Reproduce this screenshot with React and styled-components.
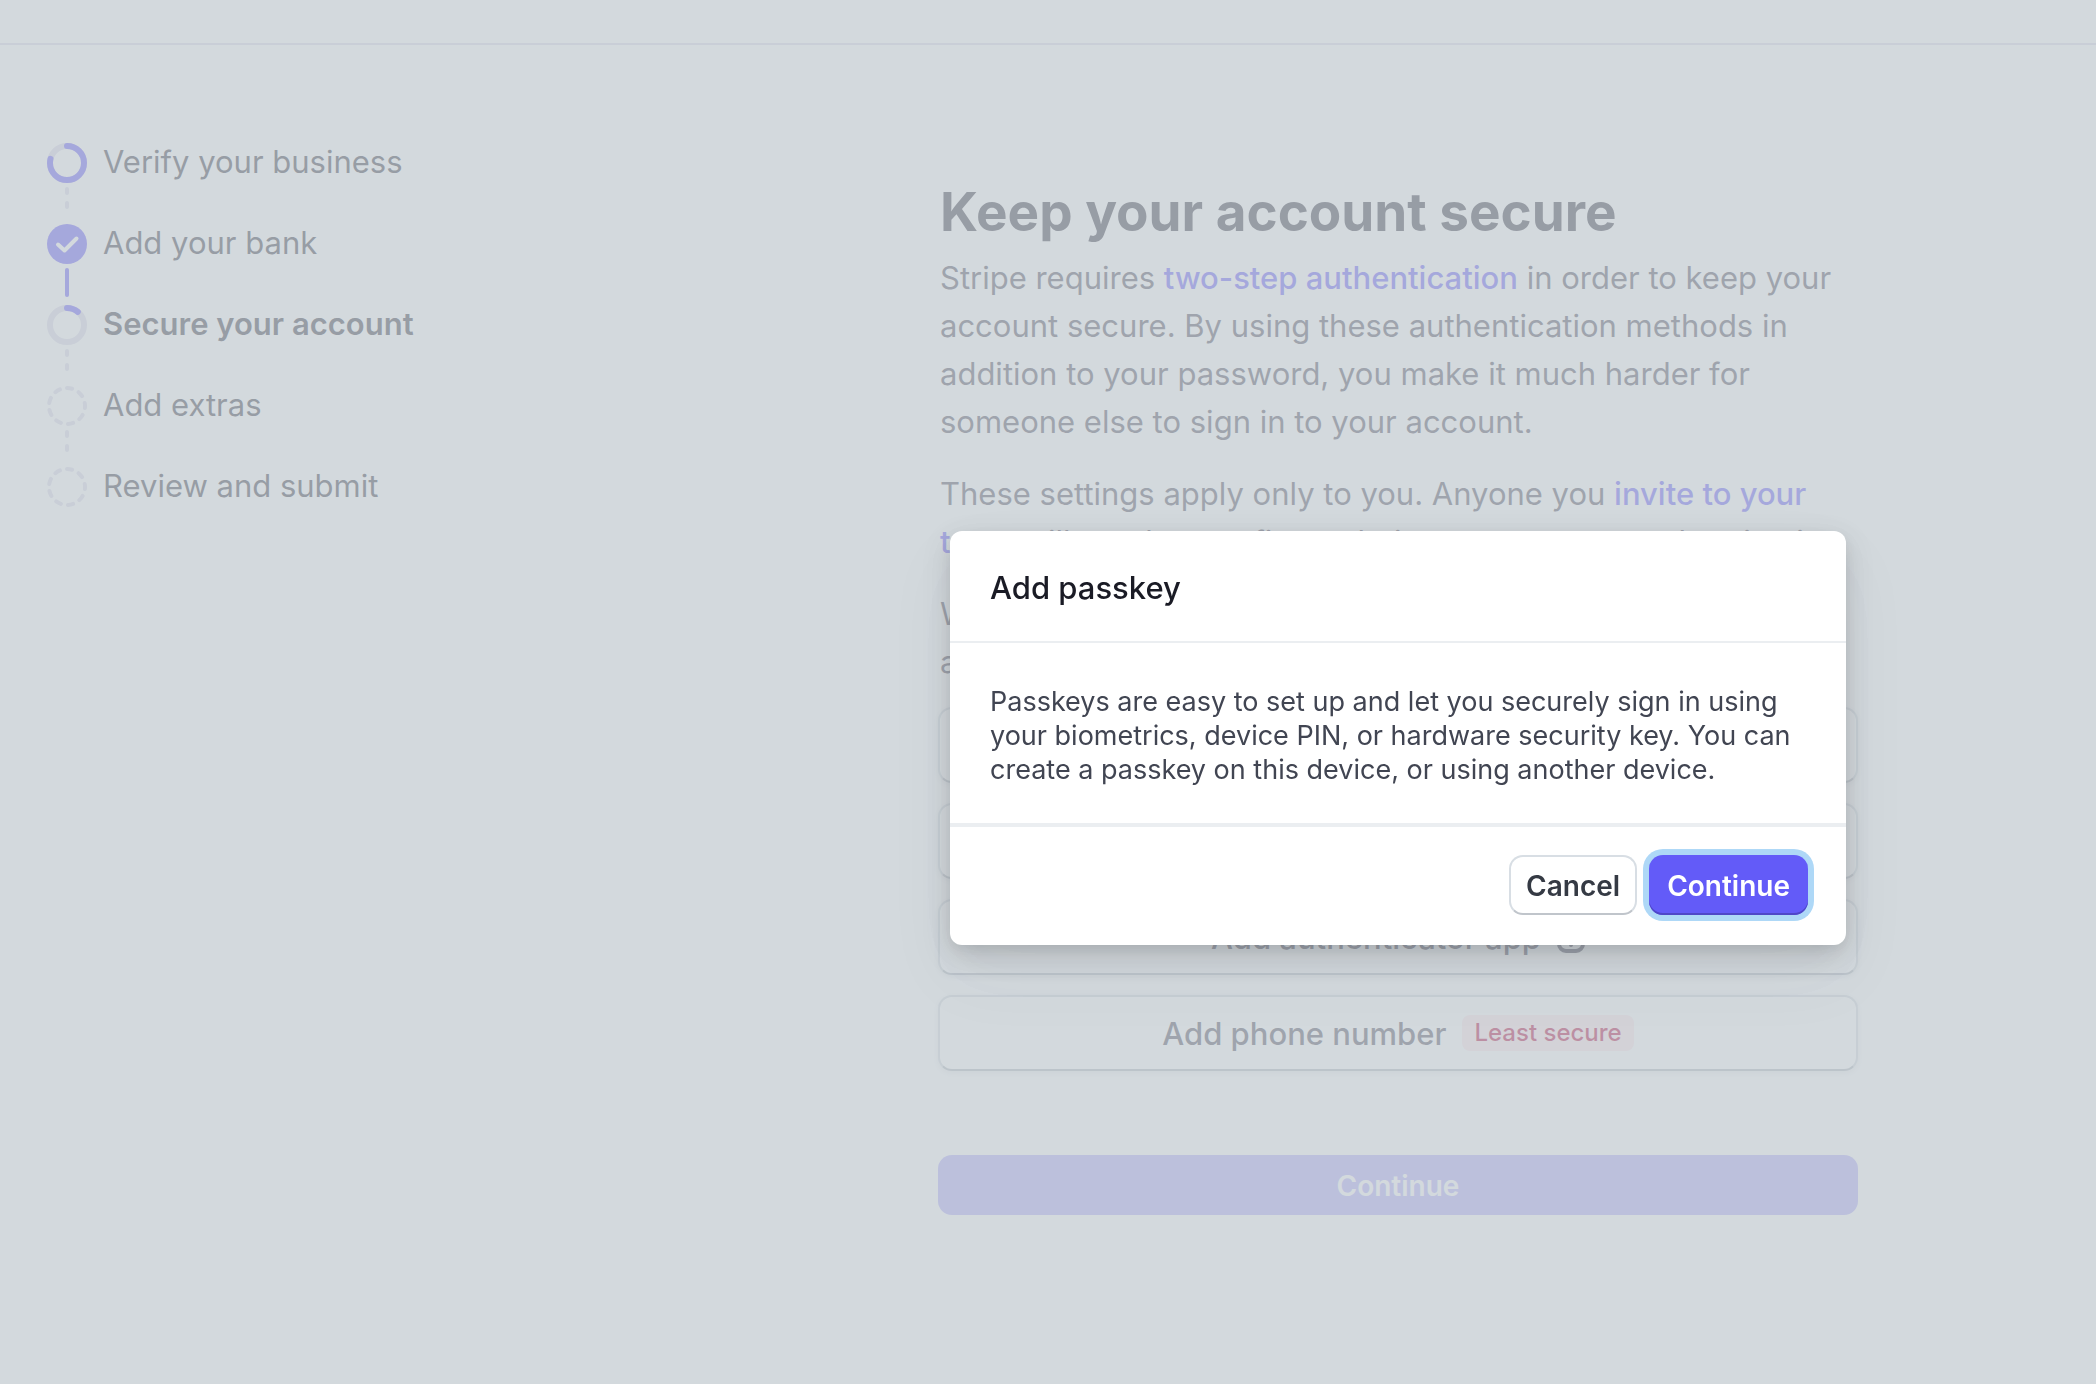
import styled, { createGlobalStyle } from 'styled-components'

const colors = {
  text: '#524f60',
  heading: '#383644',
  accent: '#675afa',
  track: '#dcdaea',
  white: '#ffffff',
}

const GlobalStyle = createGlobalStyle`
  * {
    box-sizing: border-box;
  }

  body {
    margin: 0;
    background: ${colors.white};
    color: ${colors.text};
    font-family: Inter, 'Liberation Sans', sans-serif;
    font-size: 31px;
    line-height: 48px;
  }

  button {
    font-family: inherit;
    cursor: pointer;
  }
`

const Page = styled.div`
  min-height: 100vh;
`
const TopBar = styled.header`
  height: 45px;
  border-bottom: 2px solid ${colors.track};
`
const Columns = styled.div`
  display: grid;
  grid-template-columns: 700px 1fr;
`
const Steps = styled.ol`
  display: flex;
  flex-direction: column;
  margin: 0;
  padding: 98px 24px 0 47px;
  list-style: none;
`
const Step = styled.li`
  display: flex;
  gap: 16px;
  height: 81px;
  color: ${colors.heading};
  font-weight: ${({ $current }) => ($current ? 600 : 400)};
  line-height: 38px;
`
const Marker = styled.svg`
  flex: none;
  width: 40px;
  height: 81px;
  fill: none;
  stroke-linecap: round;
`
const Main = styled.main`
  width: 920px;
  margin: 133px auto 0;
`
const Title = styled.h1`
  margin: 0;
  padding: 0 2px;
  color: ${colors.heading};
  font-size: 53px;
  font-weight: 700;
  line-height: 68px;
`
const Intro = styled.div`
  display: flex;
  flex-direction: column;
  gap: 24px;
  margin-top: 8px;
  padding: 0 2px;
`
const Paragraph = styled.p`
  margin: 0;
`
const Link = styled.a`
  color: ${colors.accent};
  font-weight: 500;
  text-decoration: none;
`
const Methods = styled.div`
  display: flex;
  flex-direction: column;
  gap: 20px;
  margin-top: 21px;
`
const MethodButton = styled.button`
  display: flex;
  align-items: center;
  justify-content: center;
  gap: 16px;
  height: 76px;
  border: 2px solid #d5dbe1;
  border-bottom-color: #b3b9c0;
  border-radius: 14px;
  background: ${colors.white};
  box-shadow: 0 2px 6px rgba(60, 66, 87, 0.12);
  color: ${colors.text};
  font-size: 31px;
  font-weight: 500;
`
const Badge = styled.span`
  padding: 0 12px;
  border-radius: 8px;
  background: #ffe6ec;
  color: #b3093c;
  font-size: 24px;
  line-height: 36px;
`
const SubmitButton = styled.button`
  width: 100%;
  height: 60px;
  margin: 84px 0 64px;
  padding: 2px 0 0;
  border: 0;
  border-radius: 14px;
  background: #b1acfc;
  color: ${colors.white};
  font-size: 28px;
  font-weight: 600;
`
const Overlay = styled.div`
  position: fixed;
  inset: 0;
  display: flex;
  align-items: center;
  justify-content: center;
  padding: 92px 0 0 700px;
  background: rgba(193, 201, 207, 0.7);
`
const Dialog = styled.section`
  width: 896px;
  border-radius: 12px;
  background: ${colors.white};
  box-shadow:
    0 30px 70px rgba(48, 49, 61, 0.06),
    0 10px 30px rgba(0, 0, 0, 0.14),
    0 4px 12px rgba(0, 0, 0, 0.06);
`
const DialogTitle = styled.h2`
  margin: 0;
  padding: 37px 40px 33px;
  border-bottom: 2px solid #ebeef1;
  color: #1a1b25;
  font-size: 31px;
  font-weight: 500;
  line-height: 40px;
`
const DialogText = styled.p`
  margin: 0;
  padding: 42px 40px 36px;
  color: #414552;
  font-size: 27px;
  line-height: 34px;
`
const DialogFooter = styled.footer`
  display: flex;
  justify-content: flex-end;
  gap: 12px;
  padding: 28px 38px 30px;
  border-top: 4px solid #ebeef1;
`
const CancelButton = styled.button`
  height: 60px;
  padding: 2px 15px 0;
  border: 2px solid #d8dee4;
  border-bottom-color: #c0c5cb;
  border-radius: 14px;
  background: ${colors.white};
  color: #353a44;
  font-size: 28px;
  font-weight: 600;
`
const ContinueButton = styled.button`
  height: 60px;
  padding: 2px 18px 0;
  border: 0;
  border-radius: 14px;
  outline: none;
  background: #635bf8;
  box-shadow:
    inset 0 -2px 0 #4f47c8,
    0 0 0 6px #aed8f7;
  color: ${colors.white};
  font-size: 28px;
  font-weight: 600;
`

const STEPS = [
  { label: 'Verify your business', progress: 79, line: 'dashed' },
  { label: 'Add your bank', done: true, line: 'solid' },
  { label: 'Secure your account', progress: 11, line: 'dashed', current: true },
  { label: 'Add extras', line: 'dashed' },
  { label: 'Review and submit' },
]

const StepMarker = ({ done, progress, line }) => (
  <Marker viewBox="0 0 40 81" aria-hidden="true">
    {done && (
      <>
        <circle cx="20" cy="20" r="20" fill={colors.accent} />
        <path
          d="M11 20.500l6.500 6L29.500 14.500"
          stroke={colors.white}
          strokeWidth="4"
          strokeLinejoin="round"
        />
      </>
    )}
    {progress && (
      <>
        <circle cx="20" cy="20" r="17" stroke={colors.track} strokeWidth="6" />
        <circle
          cx="20"
          cy="20"
          r="17"
          pathLength="100"
          stroke={colors.accent}
          strokeWidth="6"
          strokeDasharray={`${progress} 100`}
          transform="rotate(-90 20 20)"
        />
      </>
    )}
    {!done && !progress && (
      <circle
        cx="20"
        cy="20"
        r="18"
        pathLength="90"
        stroke={colors.track}
        strokeWidth="4"
        strokeDasharray="4.200 5.800"
        transform="rotate(-90 20 20)"
      />
    )}
    {line === 'solid' && (
      <path d="M20 46v25" stroke={colors.accent} strokeWidth="4" />
    )}
    {line === 'dashed' && (
      <path d="M20 46v4M20 60v4" stroke={colors.track} strokeWidth="4" />
    )}
  </Marker>
)

const DeviceIcon = () => (
  <svg width="28" height="32" viewBox="0 0 28 32" fill="none" aria-hidden="true">
    <rect x="2" y="2" width="24" height="28" rx="7" stroke="currentColor" strokeWidth="4" />
    <circle cx="14" cy="24" r="2" fill="currentColor" />
  </svg>
)

const App = () => {
  return (
    <>
      <GlobalStyle />
      <Page>
        <TopBar />
        <Columns>
          <Steps>
            {STEPS.map(({ label, current, ...marker }) => (
              <Step key={label} $current={current}>
                <StepMarker {...marker} />
                {label}
              </Step>
            ))}
          </Steps>
          <div>
            <Main>
              <Title>Keep your account secure</Title>
              <Intro>
                <Paragraph>
                  Stripe requires <Link href="#">two-step authentication</Link> in order to keep
                  your account secure. By using these authentication methods in addition to your
                  password, you make it much harder for someone else to sign in to your account.
                </Paragraph>
                <Paragraph>
                  These settings apply only to you. Anyone you{' '}
                  <Link href="#">invite to your team</Link> will need to configure their own
                  two-step authentication
                </Paragraph>
                <Paragraph>
                  We recommend adding a passkey, and at least one other authentication method.
                </Paragraph>
              </Intro>
              <Methods>
                <MethodButton>Add passkey</MethodButton>
                <MethodButton>Add security key</MethodButton>
                <MethodButton>
                  Add authenticator app
                  <DeviceIcon />
                </MethodButton>
                <MethodButton>
                  Add phone number
                  <Badge>Least secure</Badge>
                </MethodButton>
              </Methods>
              <SubmitButton>Continue</SubmitButton>
            </Main>
          </div>
        </Columns>
      </Page>
      <Overlay>
        <Dialog role="dialog" aria-modal="true" aria-labelledby="dialog-title">
          <DialogTitle id="dialog-title">Add passkey</DialogTitle>
          <DialogText>
            Passkeys are easy to set up and let you securely sign in using your biometrics, device
            PIN, or hardware security key. You can create a passkey on this device, or using another
            device.
          </DialogText>
          <DialogFooter>
            <CancelButton>Cancel</CancelButton>
            <ContinueButton>Continue</ContinueButton>
          </DialogFooter>
        </Dialog>
      </Overlay>
    </>
  )
}

export default App
